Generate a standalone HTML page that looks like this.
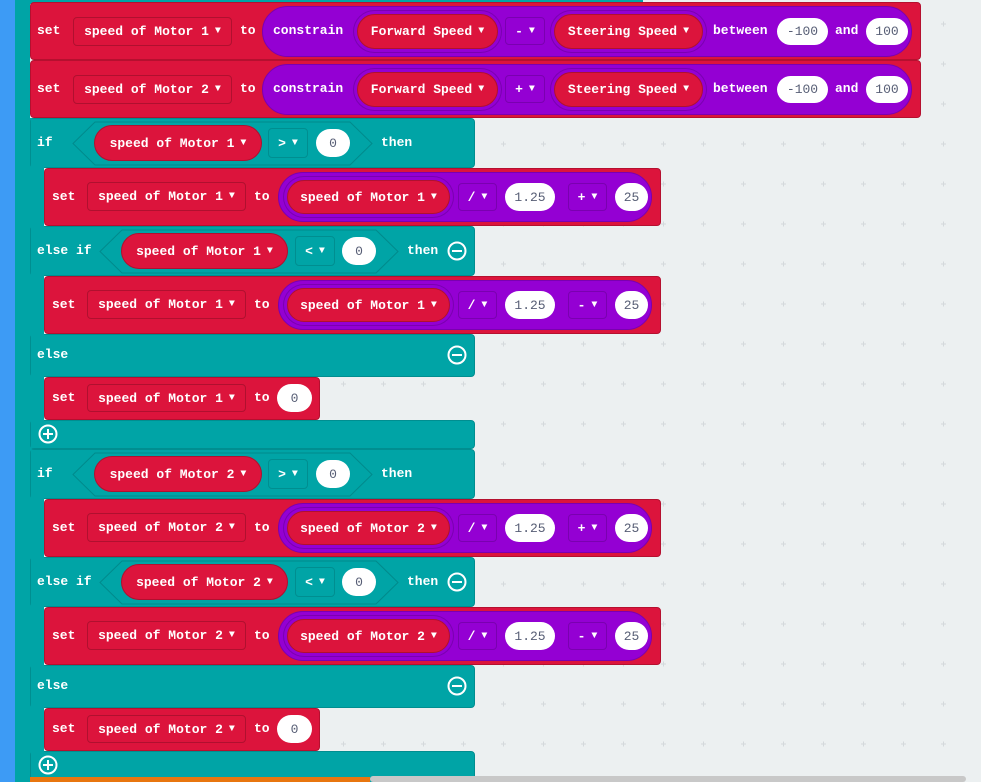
<!DOCTYPE html>
<html style="overflow:hidden;width:981px;height:782px"><head><meta charset="utf-8"><style>
*{box-sizing:border-box;margin:0;padding:0}
body{width:981px;height:782px;overflow:hidden;background:#ecf0f1;position:relative;font-family:"Liberation Mono","DejaVu Sans Mono",monospace;font-size:13px;font-weight:bold;color:#fff}
.a{position:absolute}
.t{position:absolute;line-height:16px;white-space:nowrap}
.f{position:absolute;display:flex;align-items:center;justify-content:center;white-space:nowrap}
.red{background:#dc143c}
.blk{border:1px solid #b5102f;border-radius:4px}
.dd{border:1px solid #b0102f;border-radius:4px;background:#dc143c}
.pill{background:#dc143c;border:1px solid #b0102f;border-radius:20px}
.ring{box-shadow:0 0 0 3px #9400d3,0 0 0 4px #7a00b0}
.pur{background:#9400d3;border:1px solid #7a00b0;border-radius:28px}
.op{background:#9400d3;border:1px solid #7a00b0;border-radius:4px}
.top{background:#00a4a6;border:1px solid #008e90;border-radius:4px}
.wh{background:#fff;color:#575e75;font-weight:normal;border-radius:14px}
.teal{background:#00a4a6}
.ar{font-size:10px;margin-left:6px}
</style></head><body>
<svg class="a" style="left:0;top:0" width="981" height="782">
<defs><pattern id="g" x="0" y="0" width="40" height="40" patternUnits="userSpaceOnUse">
<path d="M21 24h5M23.5 21.5v5" stroke="#d4d9dc" stroke-width="1"/></pattern></defs>
<rect width="981" height="782" fill="url(#g)"/>
</svg>
<div class="a" style="left:0;top:0;width:15px;height:782px;background:#3d9bf5"></div>
<div class="a teal" style="left:15px;top:0;width:15px;height:782px"></div>
<div class="a teal" style="left:30px;top:0;width:613px;height:4px"></div>

<!-- row 1 -->
<div class="a red blk" style="left:30px;top:2px;width:891px;height:58px"></div>
<div class="t" style="left:37px;top:23px">set</div>
<div class="f dd" style="left:73px;top:17px;width:159px;height:29px">speed of Motor 1<span class="ar">▼</span></div>
<div class="t" style="left:240px;top:23px">to</div>
<div class="a pur" style="left:262px;top:6px;width:650px;height:51px"></div>
<div class="t" style="left:273px;top:23px">constrain</div>
<div class="f pill ring" style="left:357px;top:14px;width:141px;height:35px">Forward Speed<span class="ar">▼</span></div>
<div class="f op" style="left:505px;top:17px;width:40px;height:28px">-<span class="ar">▼</span></div>
<div class="f pill ring" style="left:554px;top:14px;width:149px;height:35px">Steering Speed<span class="ar">▼</span></div>
<div class="t" style="left:713px;top:23px">between</div>
<div class="f wh" style="left:777px;top:18px;width:51px;height:27px">-100</div>
<div class="t" style="left:835px;top:23px">and</div>
<div class="f wh" style="left:866px;top:18px;width:42px;height:27px">100</div>

<!-- row 2 -->
<div class="a red blk" style="left:30px;top:60px;width:891px;height:58px"></div>
<div class="t" style="left:37px;top:81px">set</div>
<div class="f dd" style="left:73px;top:75px;width:159px;height:29px">speed of Motor 2<span class="ar">▼</span></div>
<div class="t" style="left:240px;top:81px">to</div>
<div class="a pur" style="left:262px;top:64px;width:650px;height:51px"></div>
<div class="t" style="left:273px;top:81px">constrain</div>
<div class="f pill ring" style="left:357px;top:72px;width:141px;height:35px">Forward Speed<span class="ar">▼</span></div>
<div class="f op" style="left:505px;top:75px;width:40px;height:28px">+<span class="ar">▼</span></div>
<div class="f pill ring" style="left:554px;top:72px;width:149px;height:35px">Steering Speed<span class="ar">▼</span></div>
<div class="t" style="left:713px;top:81px">between</div>
<div class="f wh" style="left:777px;top:76px;width:51px;height:27px">-100</div>
<div class="t" style="left:835px;top:81px">and</div>
<div class="f wh" style="left:866px;top:76px;width:42px;height:27px">100</div>

<!-- if group 1 -->
<div class="a" style="left:0;top:0;width:981px;height:451px">
<div class="a teal" style="left:30px;top:118px;width:14px;height:331px"></div>
<div class="a top" style="left:30px;top:118px;width:445px;height:50px"></div>
<div class="a top" style="left:30px;top:226px;width:445px;height:50px"></div>
<div class="a top" style="left:30px;top:334px;width:445px;height:43px"></div>
<div class="a top" style="left:30px;top:420px;width:445px;height:29px"></div>
<div class="a teal" style="left:31px;top:119px;width:13px;height:329px"></div>
<div class="t" style="left:37px;top:135px">if</div>
<svg class="a" style="left:0;top:0" width="500" height="450"><polygon points="73,143.5 95,122 350,122 372,143.5 350,165 95,165" fill="none" stroke="#008a8c"/><polygon points="100,251.5 122,230 376,230 398,251.5 376,273 122,273" fill="none" stroke="#008a8c"/>
<g stroke="#fff" stroke-width="2" fill="none"><circle cx="457" cy="251" r="8.5"/><path d="M452 251h10"/><circle cx="457" cy="355" r="8.5"/><path d="M452 355h10"/><circle cx="48" cy="434" r="8.5"/><path d="M43 434h10M48 429v10"/></g></svg>
<div class="f pill" style="left:94px;top:125px;width:168px;height:36px">speed of Motor 1<span class="ar">▼</span></div>
<div class="f top" style="left:268px;top:128px;width:40px;height:30px">&gt;<span class="ar">▼</span></div>
<div class="f wh" style="left:316px;top:129px;width:34px;height:28px">0</div>
<div class="t" style="left:381px;top:135px">then</div>

<div class="a red blk" style="left:44px;top:168px;width:617px;height:58px"></div>
<div class="t" style="left:52px;top:189px">set</div>
<div class="f dd" style="left:87px;top:182px;width:159px;height:29px">speed of Motor 1<span class="ar">▼</span></div>
<div class="t" style="left:254px;top:189px">to</div>
<div class="a pur" style="left:278px;top:172px;width:374px;height:50px"></div>
<div class="f pill ring" style="left:287px;top:180px;width:163px;height:34px">speed of Motor 1<span class="ar">▼</span></div>
<div class="f op" style="left:458px;top:183px;width:39px;height:28px">/<span class="ar">▼</span></div>
<div class="f wh" style="left:505px;top:183px;width:50px;height:28px">1.25</div>
<div class="f op" style="left:568px;top:183px;width:39px;height:28px">+<span class="ar">▼</span></div>
<div class="f wh" style="left:615px;top:183px;width:33px;height:28px">25</div>

<div class="t" style="left:37px;top:243px">else if</div>
<div class="f pill" style="left:121px;top:233px;width:167px;height:36px">speed of Motor 1<span class="ar">▼</span></div>
<div class="f top" style="left:295px;top:236px;width:40px;height:30px">&lt;<span class="ar">▼</span></div>
<div class="f wh" style="left:342px;top:237px;width:34px;height:28px">0</div>
<div class="t" style="left:407px;top:243px">then</div>

<div class="a red blk" style="left:44px;top:276px;width:617px;height:58px"></div>
<div class="t" style="left:52px;top:297px">set</div>
<div class="f dd" style="left:87px;top:290px;width:159px;height:29px">speed of Motor 1<span class="ar">▼</span></div>
<div class="t" style="left:254px;top:297px">to</div>
<div class="a pur" style="left:278px;top:280px;width:374px;height:50px"></div>
<div class="f pill ring" style="left:287px;top:288px;width:163px;height:34px">speed of Motor 1<span class="ar">▼</span></div>
<div class="f op" style="left:458px;top:291px;width:39px;height:28px">/<span class="ar">▼</span></div>
<div class="f wh" style="left:505px;top:291px;width:50px;height:28px">1.25</div>
<div class="f op" style="left:568px;top:291px;width:39px;height:28px">-<span class="ar">▼</span></div>
<div class="f wh" style="left:615px;top:291px;width:33px;height:28px">25</div>

<div class="t" style="left:37px;top:347px">else</div>
<div class="a red blk" style="left:44px;top:377px;width:276px;height:43px"></div>
<div class="t" style="left:52px;top:390px">set</div>
<div class="f dd" style="left:87px;top:384px;width:159px;height:28px">speed of Motor 1<span class="ar">▼</span></div>
<div class="t" style="left:254px;top:390px">to</div>
<div class="f wh" style="left:277px;top:384px;width:35px;height:28px">0</div>
</div>

<!-- if group 2 -->
<div class="a" style="left:0;top:331px;width:981px;height:451px;overflow:hidden">
<div class="a teal" style="left:30px;top:118px;width:14px;height:340px"></div>
<div class="a top" style="left:30px;top:118px;width:445px;height:50px"></div>
<div class="a top" style="left:30px;top:226px;width:445px;height:50px"></div>
<div class="a top" style="left:30px;top:334px;width:445px;height:43px"></div>
<div class="a top" style="left:30px;top:420px;width:445px;height:40px"></div>
<div class="a teal" style="left:31px;top:119px;width:13px;height:340px"></div>
<div class="t" style="left:37px;top:135px">if</div>
<svg class="a" style="left:0;top:0" width="500" height="450"><polygon points="73,143.5 95,122 350,122 372,143.5 350,165 95,165" fill="none" stroke="#008a8c"/><polygon points="100,251.5 122,230 376,230 398,251.5 376,273 122,273" fill="none" stroke="#008a8c"/>
<g stroke="#fff" stroke-width="2" fill="none"><circle cx="457" cy="251" r="8.5"/><path d="M452 251h10"/><circle cx="457" cy="355" r="8.5"/><path d="M452 355h10"/><circle cx="48" cy="434" r="8.5"/><path d="M43 434h10M48 429v10"/></g></svg>
<div class="f pill" style="left:94px;top:125px;width:168px;height:36px">speed of Motor 2<span class="ar">▼</span></div>
<div class="f top" style="left:268px;top:128px;width:40px;height:30px">&gt;<span class="ar">▼</span></div>
<div class="f wh" style="left:316px;top:129px;width:34px;height:28px">0</div>
<div class="t" style="left:381px;top:135px">then</div>

<div class="a red blk" style="left:44px;top:168px;width:617px;height:58px"></div>
<div class="t" style="left:52px;top:189px">set</div>
<div class="f dd" style="left:87px;top:182px;width:159px;height:29px">speed of Motor 2<span class="ar">▼</span></div>
<div class="t" style="left:254px;top:189px">to</div>
<div class="a pur" style="left:278px;top:172px;width:374px;height:50px"></div>
<div class="f pill ring" style="left:287px;top:180px;width:163px;height:34px">speed of Motor 2<span class="ar">▼</span></div>
<div class="f op" style="left:458px;top:183px;width:39px;height:28px">/<span class="ar">▼</span></div>
<div class="f wh" style="left:505px;top:183px;width:50px;height:28px">1.25</div>
<div class="f op" style="left:568px;top:183px;width:39px;height:28px">+<span class="ar">▼</span></div>
<div class="f wh" style="left:615px;top:183px;width:33px;height:28px">25</div>

<div class="t" style="left:37px;top:243px">else if</div>
<div class="f pill" style="left:121px;top:233px;width:167px;height:36px">speed of Motor 2<span class="ar">▼</span></div>
<div class="f top" style="left:295px;top:236px;width:40px;height:30px">&lt;<span class="ar">▼</span></div>
<div class="f wh" style="left:342px;top:237px;width:34px;height:28px">0</div>
<div class="t" style="left:407px;top:243px">then</div>

<div class="a red blk" style="left:44px;top:276px;width:617px;height:58px"></div>
<div class="t" style="left:52px;top:297px">set</div>
<div class="f dd" style="left:87px;top:290px;width:159px;height:29px">speed of Motor 2<span class="ar">▼</span></div>
<div class="t" style="left:254px;top:297px">to</div>
<div class="a pur" style="left:278px;top:280px;width:374px;height:50px"></div>
<div class="f pill ring" style="left:287px;top:288px;width:163px;height:34px">speed of Motor 2<span class="ar">▼</span></div>
<div class="f op" style="left:458px;top:291px;width:39px;height:28px">/<span class="ar">▼</span></div>
<div class="f wh" style="left:505px;top:291px;width:50px;height:28px">1.25</div>
<div class="f op" style="left:568px;top:291px;width:39px;height:28px">-<span class="ar">▼</span></div>
<div class="f wh" style="left:615px;top:291px;width:33px;height:28px">25</div>

<div class="t" style="left:37px;top:347px">else</div>
<div class="a red blk" style="left:44px;top:377px;width:276px;height:43px"></div>
<div class="t" style="left:52px;top:390px">set</div>
<div class="f dd" style="left:87px;top:384px;width:159px;height:28px">speed of Motor 2<span class="ar">▼</span></div>
<div class="t" style="left:254px;top:390px">to</div>
<div class="f wh" style="left:277px;top:384px;width:35px;height:28px">0</div>
</div>
<div class="a" style="left:30px;top:777px;width:340px;height:5px;background:#e8760f"></div>
<div class="a" style="left:370px;top:776px;width:596px;height:6px;background:#c8c8c8;border-radius:3px"></div>
</body></html>
